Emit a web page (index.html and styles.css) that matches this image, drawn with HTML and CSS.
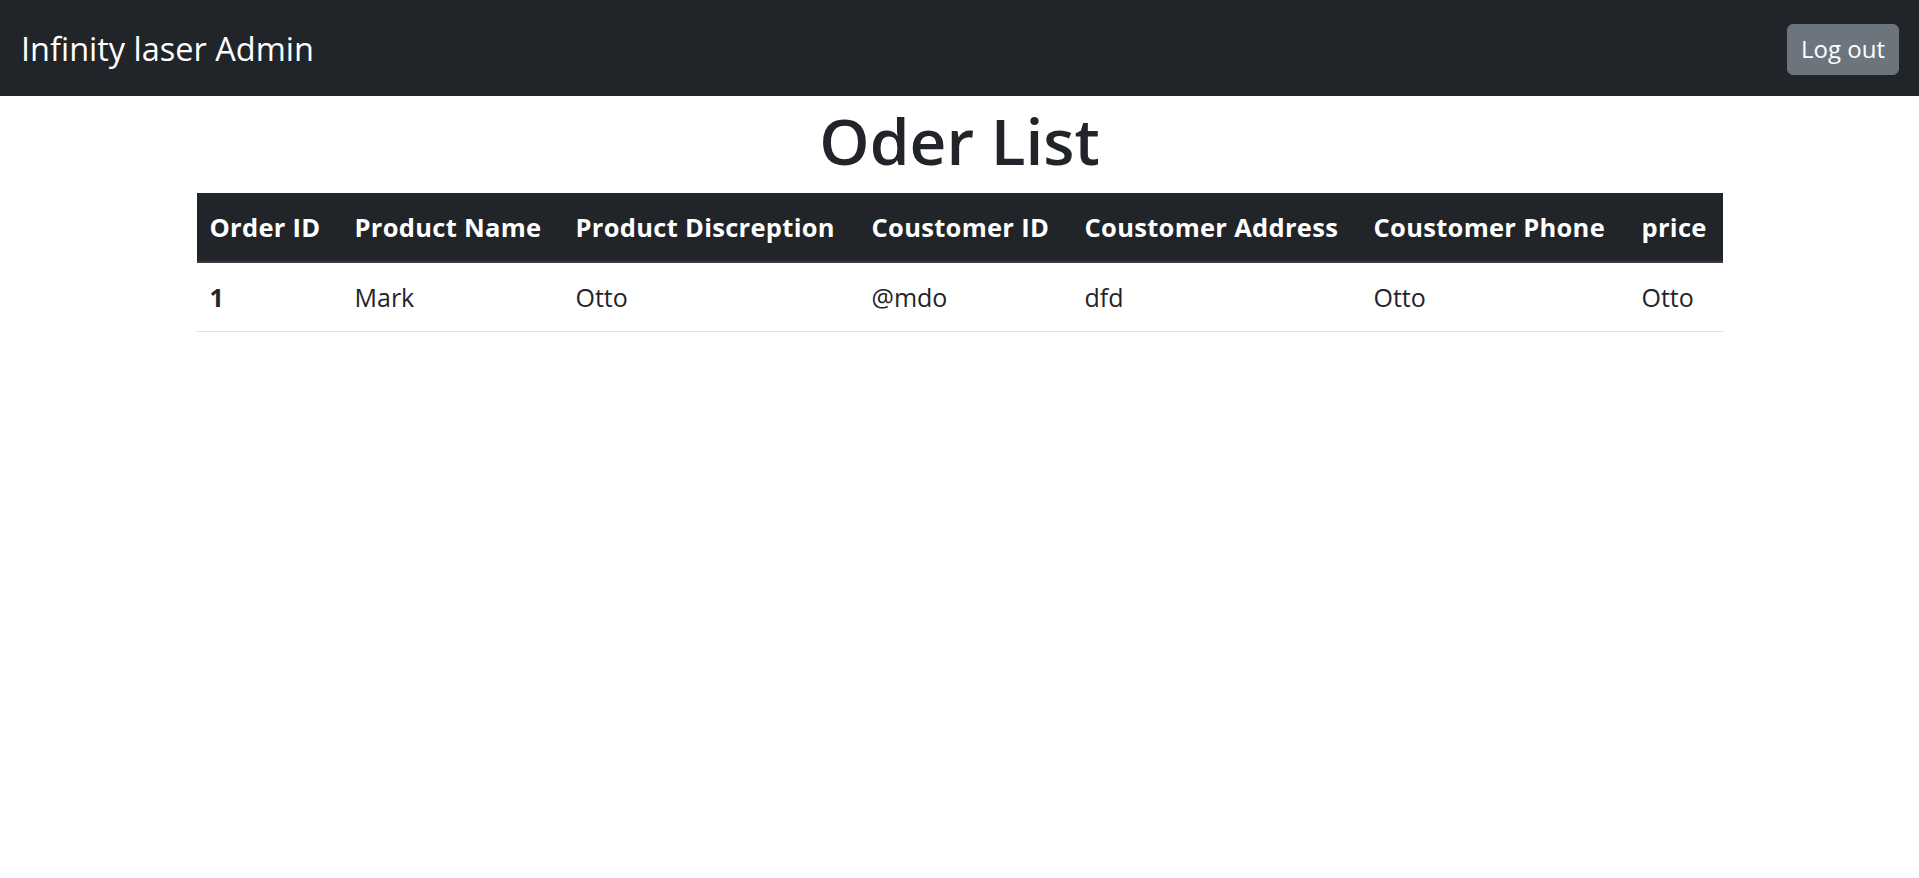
FILE: index.html
```html
<!DOCTYPE html>
<html lang="en">
<head>
<meta charset="utf-8">
<title>Infinity laser Admin</title>
<link rel="stylesheet" href="styles.css">
</head>
<body>
<nav class="navbar">
  <a class="brand" href="#">Infinity laser Admin</a>
  <button class="btn-logout" type="button">Log out</button>
</nav>
<main class="content">
  <h1 class="title">Oder List</h1>
  <table class="orders">
    <colgroup>
      <col class="c1"><col class="c2"><col class="c3"><col class="c4"><col class="c5"><col class="c6"><col class="c7">
    </colgroup>
    <thead>
      <tr>
        <th>Order ID</th>
        <th>Product Name</th>
        <th>Product Discreption</th>
        <th>Coustomer ID</th>
        <th>Coustomer Address</th>
        <th>Coustomer Phone</th>
        <th>price</th>
      </tr>
    </thead>
    <tbody>
      <tr>
        <th class="row-head">1</th>
        <td>Mark</td>
        <td>Otto</td>
        <td>@mdo</td>
        <td>dfd</td>
        <td>Otto</td>
        <td>Otto</td>
      </tr>
    </tbody>
  </table>
</main>
</body>
</html>
```
FILE: styles.css
```css
* { box-sizing: border-box; }
html, body { margin: 0; padding: 0; }
body {
  font-family: "Open Sans", "Noto Sans", "Liberation Sans", sans-serif;
  color: #212529;
  background: #fff;
  font-size: 25.6px;
}
.navbar {
  height: 96px;
  background: #212529;
  display: flex;
  align-items: center;
  justify-content: space-between;
  padding: 0 20px 0 21px;
}
.brand {
  color: #fff;
  text-decoration: none;
  font-size: 32.5px;
  line-height: 1;
  padding-top: 3px;
}
.btn-logout {
  font-family: inherit;
  font-size: 24px;
  color: #fff;
  background: #6c757d;
  border: 1px solid #6c757d;
  border-radius: 6px;
  height: 51px;
  width: 112px;
  padding: 0 0 1px;
  line-height: 1;
  margin-top: 2px;
  cursor: pointer;
}
.content {
  width: 1526px;
  margin: 0 auto;
  padding-top: 5px;
}
.title {
  margin: 0 0 12px;
  text-align: center;
  font-size: 64px;
  font-weight: 600;
  line-height: 80px;
}
.orders {
  width: 1526px;
  border-collapse: collapse;
  table-layout: fixed;
}
.c1 { width: 145px; }
.c2 { width: 221px; }
.c3 { width: 296px; }
.c4 { width: 213px; }
.c5 { width: 289px; }
.c6 { width: 268px; }
.c7 { width: 94px; }
.orders th, .orders td {
  text-align: left;
  white-space: nowrap;
  padding: 14px 0 14px 13px;
  line-height: 40px;
  font-size: 25px;
  vertical-align: middle;
}
.orders thead th {
  background: #212529;
  color: #fff;
  font-weight: 700;
  font-size: 25.5px;
  letter-spacing: 0.3px;
  border-bottom: 2px solid #393d41;
}
.orders tbody th, .orders tbody td {
  border-bottom: 1.5px solid #dee2e6;
}
.orders tbody td { font-weight: 400; }
.orders .row-head { font-weight: 700; }
```
